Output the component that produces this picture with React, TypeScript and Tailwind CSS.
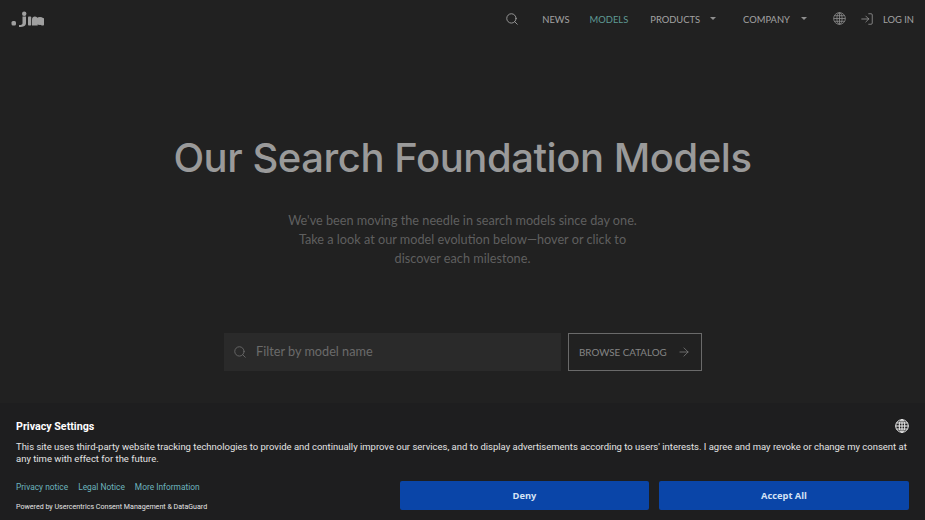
import { ArrowRight, LogIn, Search } from 'lucide-react';

function Logo() {
  return (
    <svg width="34" height="17" viewBox="0 0 34 17" fill="#a0a0a0">
      <rect x="1.500" y="10" width="4.500" height="4.500" rx="1.500" />
      <path d="M12.500 5.500H16v6.500c0 2.800-2.200 4-7 4v-2c2.800 0 3.500-.5 3.500-2z" />
      <circle cx="14.200" cy="2.800" r="2.200" />
      <rect x="18" y="5.500" width="3.200" height="9" rx="0.800" />
      <path d="M22 14.500V8.500c0-1.900 1.200-3 2.900-3s2.800 1.100 2.800 3v6z" />
      <circle cx="30" cy="10" r="4" />
      <rect x="31" y="7" width="3" height="7.500" rx="0.800" />
    </svg>
  );
}

function Caret() {
  return <span className="w-0 h-0 border-x-[3px] border-x-transparent border-t-[3px] border-t-[#8f8f8f]" />;
}

function GlobeIcon({ size, color, width }: { size: number; color: string; width: number }) {
  return (
    <svg width={size} height={size} viewBox="0 0 14 14" fill="none" stroke={color} strokeWidth={width} className="shrink-0">
      <circle cx="7" cy="7" r="6.300" />
      <ellipse cx="7" cy="7" rx="2.800" ry="6.300" />
      <path d="M7 .7v12.600M.7 7h12.600M1.500 4h11M1.500 10h11" />
    </svg>
  );
}

function Header() {
  return (
    <header className="h-[38px] flex items-center justify-between pl-[10px] pr-[11px]">
      <Logo />
      <nav className="flex items-center text-[9.400px] text-[#a3a3a3]">
        <Search size={14} strokeWidth={1.5} className="mr-[23px]" />
        <span className="mr-[20px] pt-[2px]">NEWS</span>
        <span className="mr-[22px] pt-[2px] text-[#5f9a94]">MODELS</span>
        <span className="mr-[10px] pt-[2px]">PRODUCTS</span>
        <Caret />
        <span className="ml-[27px] mr-[11px] pt-[2px]">COMPANY</span>
        <Caret />
        <span className="ml-[26px] mr-[14px]">
          <GlobeIcon size={13} color="#8a8a8a" width={0.9} />
        </span>
        <LogIn size={14} strokeWidth={1.25} className="mr-[9px]" />
        <span className="pt-[2px]">LOG IN</span>
      </nav>
    </header>
  );
}

function Banner() {
  return (
    <section className="absolute inset-x-0 bottom-0 h-[117px] bg-[#1e1e1f] px-4 pt-[15px] text-white" style={{ fontFamily: 'Roboto, sans-serif' }}>
      <div className="flex items-center justify-between h-4">
        <h2 className="pt-[2px] text-[10.700px] font-bold">Privacy Settings</h2>
        <GlobeIcon size={14} color="#f2f2f2" width={1} />
      </div>
      <p className="mt-[7px] text-[9.480px] leading-[12px] text-[#e4e4e4]">
        This site uses third-party website tracking technologies to provide and continually improve our services, and to display advertisements according to users' interests. I agree and may revoke or change my consent at any time with effect for the future.
      </p>
      <div className="mt-[16px] flex justify-between">
        <div>
          <div className="flex gap-[10px] text-[8.400px] text-[#6cb3bd]">
            <span>Privacy notice</span>
            <span>Legal Notice</span>
            <span>More Information</span>
          </div>
          <p className="mt-[8px] text-[7.100px] text-[#e4e4e4]">Powered by Usercentrics Consent Management &amp; DataGuard</p>
        </div>
        <div className="flex gap-[10px] font-bold text-[9.300px] text-[#d5e2f5]" style={{ fontFamily: '"Open Sans", sans-serif' }}>
          <button className="w-[249px] h-[29px] rounded-[2px] bg-[#0a45a8]">Deny</button>
          <button className="w-[250px] h-[29px] rounded-[2px] bg-[#0a45a8]">Accept All</button>
        </div>
      </div>
    </section>
  );
}

export default function App() {
  return (
    <div className="relative w-[925px] h-[520px] overflow-hidden bg-[#212121]" style={{ fontFamily: 'Lato, "Open Sans", sans-serif' }}>
      <Header />
      <main className="flex flex-col items-center">
        <h1 className="mt-[91px] text-[40px] leading-[58px] font-medium tracking-[-0.45px] text-[#9a9a9a] whitespace-nowrap" style={{ fontFamily: 'Inter, sans-serif' }}>
          Our Search Foundation Models
        </h1>
        <p className="mt-[24px] w-[370px] text-center text-[12.700px] leading-[19px] text-[#5f5f5f]">
          We've been moving the needle in search models since day one.<br />Take a look at our model evolution below—hover or click to<br />discover each milestone.
        </p>
        <div className="mt-[65px] pl-[1px] flex gap-[7px]">
          <div className="w-[337px] h-[38px] bg-[#2a2a2a] flex items-center pl-[9px] text-[12.700px] text-[#6b6b6b]">
            <Search size={14} strokeWidth={1.5} className="mr-[9px]" />
            Filter by model name
          </div>
          <div className="w-[134px] h-[38px] border border-[#6a6a6a] flex items-center pl-[10px] text-[9.800px] text-[#858585]">
            BROWSE CATALOG
            <ArrowRight size={14} strokeWidth={1.25} className="ml-[10px]" />
          </div>
        </div>
      </main>
      <Banner />
    </div>
  );
}
